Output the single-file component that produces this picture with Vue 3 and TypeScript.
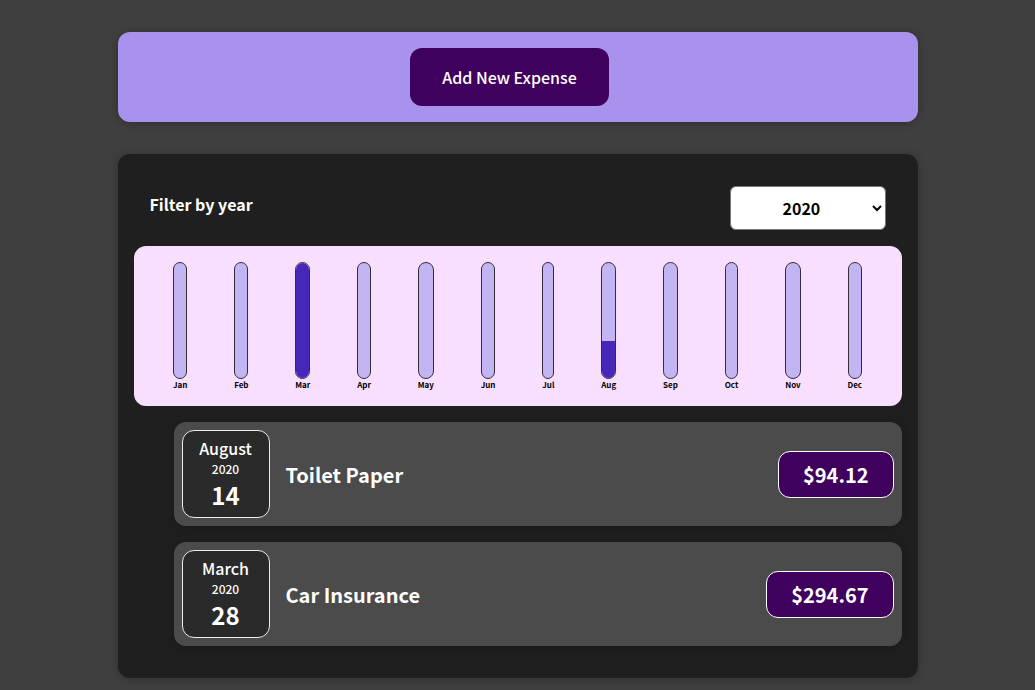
<script setup lang="ts">
import { computed, ref } from 'vue'

interface Expense {
  id: string
  title: string
  amount: number
  month: number
  day: number
  year: string
}

const monthNames = [
  'January', 'February', 'March', 'April', 'May', 'June',
  'July', 'August', 'September', 'October', 'November', 'December',
]
const years = ['2022', '2021', '2020', '2019']

const expenses: Expense[] = [
  { id: 'e1', title: 'Toilet Paper', amount: 94.12, month: 7, day: 14, year: '2020' },
  { id: 'e2', title: 'Car Insurance', amount: 294.67, month: 2, day: 28, year: '2020' },
]

const selectedYear = ref('2020')
const filtered = computed(() => expenses.filter((e) => e.year === selectedYear.value))

const bars = computed(() => {
  const totals = monthNames.map((_, i) =>
    filtered.value.filter((e) => e.month === i).reduce((sum, e) => sum + e.amount, 0),
  )
  const max = Math.max(...totals)
  return totals.map((total, i) => ({
    label: monthNames[i].slice(0, 3),
    fill: max > 0 ? `${Math.round((total / max) * 100)}%` : '0%',
  }))
})
</script>

<template>
  <main class="page">
    <section class="new-expense">
      <button type="button" class="add-button">Add New Expense</button>
    </section>

    <section class="expenses">
      <div class="filter">
        <label for="year">Filter by year</label>
        <select id="year" v-model="selectedYear">
          <option v-for="year in years" :key="year" :value="year">{{ year }}</option>
        </select>
      </div>

      <div class="chart">
        <div v-for="bar in bars" :key="bar.label" class="chart-bar">
          <div class="bar-inner">
            <div class="bar-fill" :style="{ height: bar.fill }"></div>
          </div>
          <div class="bar-label">{{ bar.label }}</div>
        </div>
      </div>

      <ul class="list">
        <li v-for="expense in filtered" :key="expense.id" class="item">
          <div class="date">
            <div class="month">{{ monthNames[expense.month] }}</div>
            <div class="year">{{ expense.year }}</div>
            <div class="day">{{ expense.day }}</div>
          </div>
          <h2>{{ expense.title }}</h2>
          <div class="price">${{ expense.amount.toFixed(2) }}</div>
        </li>
      </ul>
    </section>
  </main>
</template>

<style>
body {
  background: #3f3f3f;
}
</style>

<style scoped>
.page,
.add-button,
.filter select {
  font-family: "Noto Sans CJK JP", "Noto Sans", sans-serif;
}

.page {
  box-sizing: border-box;
  max-width: 832px;
  margin: 0 auto;
  padding: 32px 16px 12px;
  color: #fff;
}

.new-expense,
.expenses {
  border-radius: 12px;
  padding: 16px;
  box-shadow: 0 1px 8px rgba(0, 0, 0, 0.25);
}

.new-expense {
  background: #a892ee;
  text-align: center;
  margin-bottom: 32px;
}

.add-button {
  display: inline-block;
  vertical-align: top;
  margin-right: 16px;
  padding: 16px 32px;
  border: 0;
  border-radius: 12px;
  background: #40005d;
  color: #fff;
  font-size: 16px;
  font-weight: 500;
  line-height: 26px;
  cursor: pointer;
}

.expenses {
  background: #1f1f1f;
}

.filter {
  display: flex;
  align-items: center;
  justify-content: space-between;
  padding: 16px;
}

.filter label {
  margin-bottom: 8px;
  font-size: 16px;
  font-weight: 700;
  line-height: 24px;
}

.filter select {
  height: 44px;
  padding: 8px 48px;
  border: 1px solid #767676;
  border-radius: 6px;
  background-color: #fff;
  color: #000;
  font-size: 16px;
  font-weight: 700;
}

.chart {
  display: flex;
  justify-content: space-around;
  height: 128px;
  padding: 16px;
  border-radius: 12px;
  background: #f8dfff;
}

.chart-bar {
  display: flex;
  flex-direction: column;
  align-items: center;
}

.bar-inner {
  display: flex;
  flex: 1;
  flex-direction: column;
  justify-content: flex-end;
  box-sizing: border-box;
  width: 100%;
  border: 1px solid #313131;
  border-radius: 12px;
  background: #c3b4f3;
  overflow: hidden;
}

.bar-fill {
  background: #4826b9;
}

.bar-label {
  color: #000;
  font-size: 8px;
  font-weight: 700;
  text-align: center;
}

.list {
  margin: 0;
  padding: 0 0 0 40px;
  list-style: none;
}

.item {
  display: flex;
  align-items: center;
  gap: 16px;
  margin: 16px 0;
  padding: 8px;
  border-radius: 12px;
  background: #4b4b4b;
  box-shadow: 0 1px 8px rgba(0, 0, 0, 0.25);
}

.date {
  display: flex;
  flex-direction: column;
  align-items: center;
  justify-content: center;
  box-sizing: border-box;
  width: 88px;
  height: 88px;
  border: 1px solid #ececec;
  border-radius: 12px;
  background: #2a2a2a;
}

.month {
  font-size: 16px;
  font-weight: 500;
  line-height: 23px;
}

.year {
  font-size: 12px;
  font-weight: 500;
  line-height: 17px;
}

.day {
  font-size: 24px;
  font-weight: 700;
  line-height: 35px;
}

.item h2 {
  flex: 1;
  margin: 0;
  font-size: 20px;
  font-weight: 700;
}

.price {
  padding: 8px 24px;
  border: 1px solid #fff;
  border-radius: 12px;
  background: #40005d;
  font-size: 20px;
  font-weight: 700;
  line-height: 29px;
}
</style>
